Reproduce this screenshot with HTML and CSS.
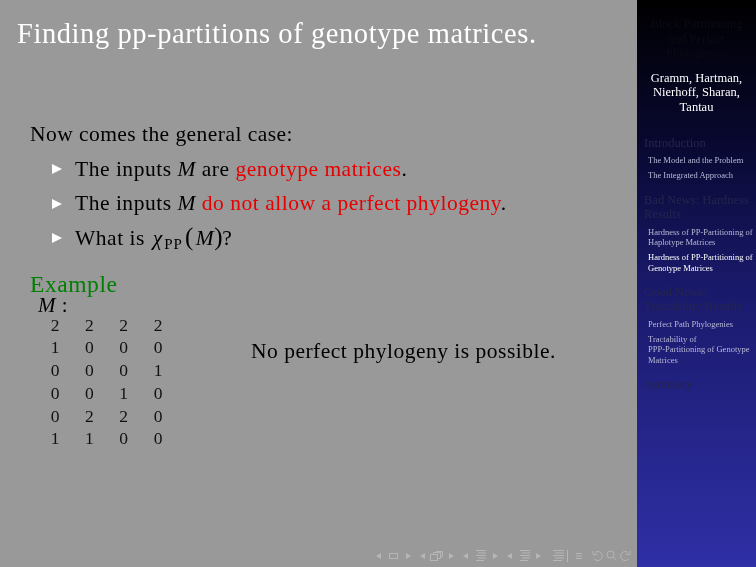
FILE: index.html
```html
<!DOCTYPE html>
<html lang="en">
<head>
<meta charset="utf-8">
<title>Finding pp-partitions of genotype matrices</title>
<link rel="stylesheet" href="styles.css">
</head>
<body>
<div class="slide">
  <main class="main">
    <h1 class="frametitle">Finding pp-partitions of genotype matrices.</h1>
    <div class="content">
      <p class="lead">Now comes the general case:</p>
      <ul class="items">
        <li class="item"><span class="tri"></span><span>The inputs <i>M</i> are <span class="alert">genotype matrices</span>.</span></li>
        <li class="item"><span class="tri"></span><span>The inputs <i>M</i> <span class="alert">do not allow a perfect phylogeny</span>.</span></li>
        <li class="item"><span class="tri"></span><span>What is <i class="chi">χ</i><span class="sub">PP</span><span class="paren">(</span><i>M</i><span class="paren-close">)</span>?</span></li>
      </ul>
      <section class="example">
        <h2 class="example-title">Example</h2>
        <div class="example-body">
          <div class="matrix-block">
            <div class="mlabel"><i>M</i> :</div>
            <div class="matrix">
              <span>2</span><span>2</span><span>2</span><span>2</span>
              <span>1</span><span>0</span><span>0</span><span>0</span>
              <span>0</span><span>0</span><span>0</span><span>1</span>
              <span>0</span><span>0</span><span>1</span><span>0</span>
              <span>0</span><span>2</span><span>2</span><span>0</span>
              <span>1</span><span>1</span><span>0</span><span>0</span>
            </div>
          </div>
          <p class="note">No perfect phylogeny is possible.</p>
        </div>
      </section>
    </div>
    <nav class="navsyms" aria-label="Navigation symbols">
      <svg width="260" height="16" viewBox="0 0 260 16" fill="none" stroke="#b6b6b6" stroke-width="1">
        <path d="M1 8l5-3v6z" fill="#b6b6b6" stroke="none"/>
        <rect x="14.500" y="5.500" width="8" height="5"/>
        <path d="M31 5l5 3-5 3z" fill="#b6b6b6" stroke="none"/>
        <path d="M45 8l5-3v6z" fill="#b6b6b6" stroke="none"/>
        <rect x="55.500" y="6.500" width="7" height="6"/><path d="M58.500 6.500v-2h7v6h-3M61.500 4.500v-1h6v5h-2"/>
        <path d="M74 5l5 3-5 3z" fill="#b6b6b6" stroke="none"/>
        <path d="M88 8l5-3v6z" fill="#b6b6b6" stroke="none"/>
        <path d="M101 2.500h10M103 5h8M101 7.500h10M103 10h8M101 12.500h8"/>
        <path d="M118 5l5 3-5 3z" fill="#b6b6b6" stroke="none"/>
        <path d="M132 8l5-3v6z" fill="#b6b6b6" stroke="none"/>
        <path d="M145 2.500h10M147 5h8M145 7.500h10M147 10h8M145 12.500h8"/>
        <path d="M161 5l5 3-5 3z" fill="#b6b6b6" stroke="none"/>
        <path d="M178 2.500h11M180 5h9M178 7.500h11M180 10h9M178 12.500h9"/>
        <path d="M192.500 2v12"/>
        <path d="M201 5.500h6M201 8h6M201 10.500h6"/>
        <path d="M220 4.500a4.500 4.500 0 1 1 -1 6M217.500 3l1 4 4-1"/>
        <circle cx="235.500" cy="6.500" r="3.500"/><path d="M238 9l3 3"/>
        <path d="M253 4.500a4.500 4.500 0 1 0 1 6M255.500 3l-1 4-4-1"/>
      </svg>
    </nav>
  </main>
  <aside class="sidebar">
    <div class="sidebar-inner">
      <div class="title-block">
        <div class="short-title">Block Partitioning<br>and Perfect<br>Phylogenies</div>
        <div class="authors">Gramm, Hartman,<br>Nierhoff, Sharan,<br>Tantau</div>
      </div>
      <div class="section">Introduction</div>
      <div class="sub-item">The Model and the Problem</div>
      <div class="sub-item">The Integrated Approach</div>
      <div class="section">Bad News: Hardness Results</div>
      <div class="sub-item">Hardness of PP-Partitioning of Haplotype Matrices</div>
      <div class="sub-item current">Hardness of PP-Partitioning of Genotype Matrices</div>
      <div class="section">Good News: Tractability Results</div>
      <div class="sub-item">Perfect Path Phylogenies</div>
      <div class="sub-item">Tractability of<br>PPP-Partitioning of Genotype Matrices</div>
      <div class="section">Summary</div>
    </div>
  </aside>
</div>
</body>
</html>
```
FILE: styles.css
```css
* { box-sizing: border-box; }
html, body { margin: 0; padding: 0; }
body { font-family: "Liberation Serif", "Times New Roman", serif; }
.slide { width: 756px; height: 567px; display: flex; overflow: hidden; background: #999; }
.main { position: relative; width: 637px; height: 567px; color: #000; filter: blur(0.3px); }
.frametitle { margin: 0; padding: 17px 0 0 17px; font-weight: 400; font-size: 28.500px; line-height: 34px; letter-spacing: 0.580px; color: #fff; }
.content { padding: 70px 0 0 30px; font-size: 21.500px; letter-spacing: 0.450px; }
.lead { margin: 0; line-height: 26px; }
.items { list-style: none; margin: 5px 0 0; padding: 0 0 0 22px; letter-spacing: 0.520px; }
.item { display: flex; align-items: center; gap: 13px; height: 34.500px; }
.tri { width: 0; height: 0; border-left: 10px solid #fff; border-top: 5px solid transparent; border-bottom: 5px solid transparent; }
.alert { color: #e60000; }
.chi { font-style: italic; margin-left: 2px; letter-spacing: 1px; }
.sub { font-size: 15px; position: relative; top: 4px; margin-left: 1px; letter-spacing: 1px; }
.paren { font-size: 25px; line-height: 20px; margin: 0 2px; }
.paren-close { font-size: 25px; line-height: 20px; margin: 0 -1px 0 0; }
.example { margin-top: 15px; }
.example-title { margin: 0; font-weight: 400; font-size: 23.500px; line-height: 27px; letter-spacing: 0.570px; color: #008000; }
.example-body { display: flex; }
.matrix-block { width: 221px; padding-left: 8px; }
.mlabel { font-size: 21px; line-height: 14px; }
.matrix { display: grid; grid-template-columns: repeat(4, 34.300px); margin-top: 2px; font-size: 17.500px; line-height: 22.800px; letter-spacing: 0; text-align: center; width: 137px; color: #111; }
.note { margin: 40px 0 0; line-height: 26px; letter-spacing: 0.500px; }
.navsyms { position: absolute; left: 375px; bottom: 3px; line-height: 0; }
.sidebar { width: 119px; height: 567px; background: linear-gradient(to bottom, #000 0%, #080830 25%, #19196a 50%, #2f2fa6 100%); }
.sidebar-inner { padding: 17px 0 0; color: #b8b8d6; font-size: 8.500px; filter: blur(0.3px); }
.title-block { text-align: center; padding-bottom: 9px; }
.short-title { font-size: 12.500px; line-height: 14.500px; color: #0b0b14; height: 43.500px; white-space: nowrap; }
.authors { color: #fff; font-size: 12.500px; line-height: 14.700px; margin-top: 10px; }
.section { margin: 12px 0 0; padding: 0 7px; font-size: 12.500px; line-height: 14px; color: #25254e; }
.sub-item { margin-top: 4.500px; padding: 0 3px 0 11px; line-height: 10.500px; }
.section + .sub-item { margin-top: 5.750px; }
.current { color: #fff; }
```
